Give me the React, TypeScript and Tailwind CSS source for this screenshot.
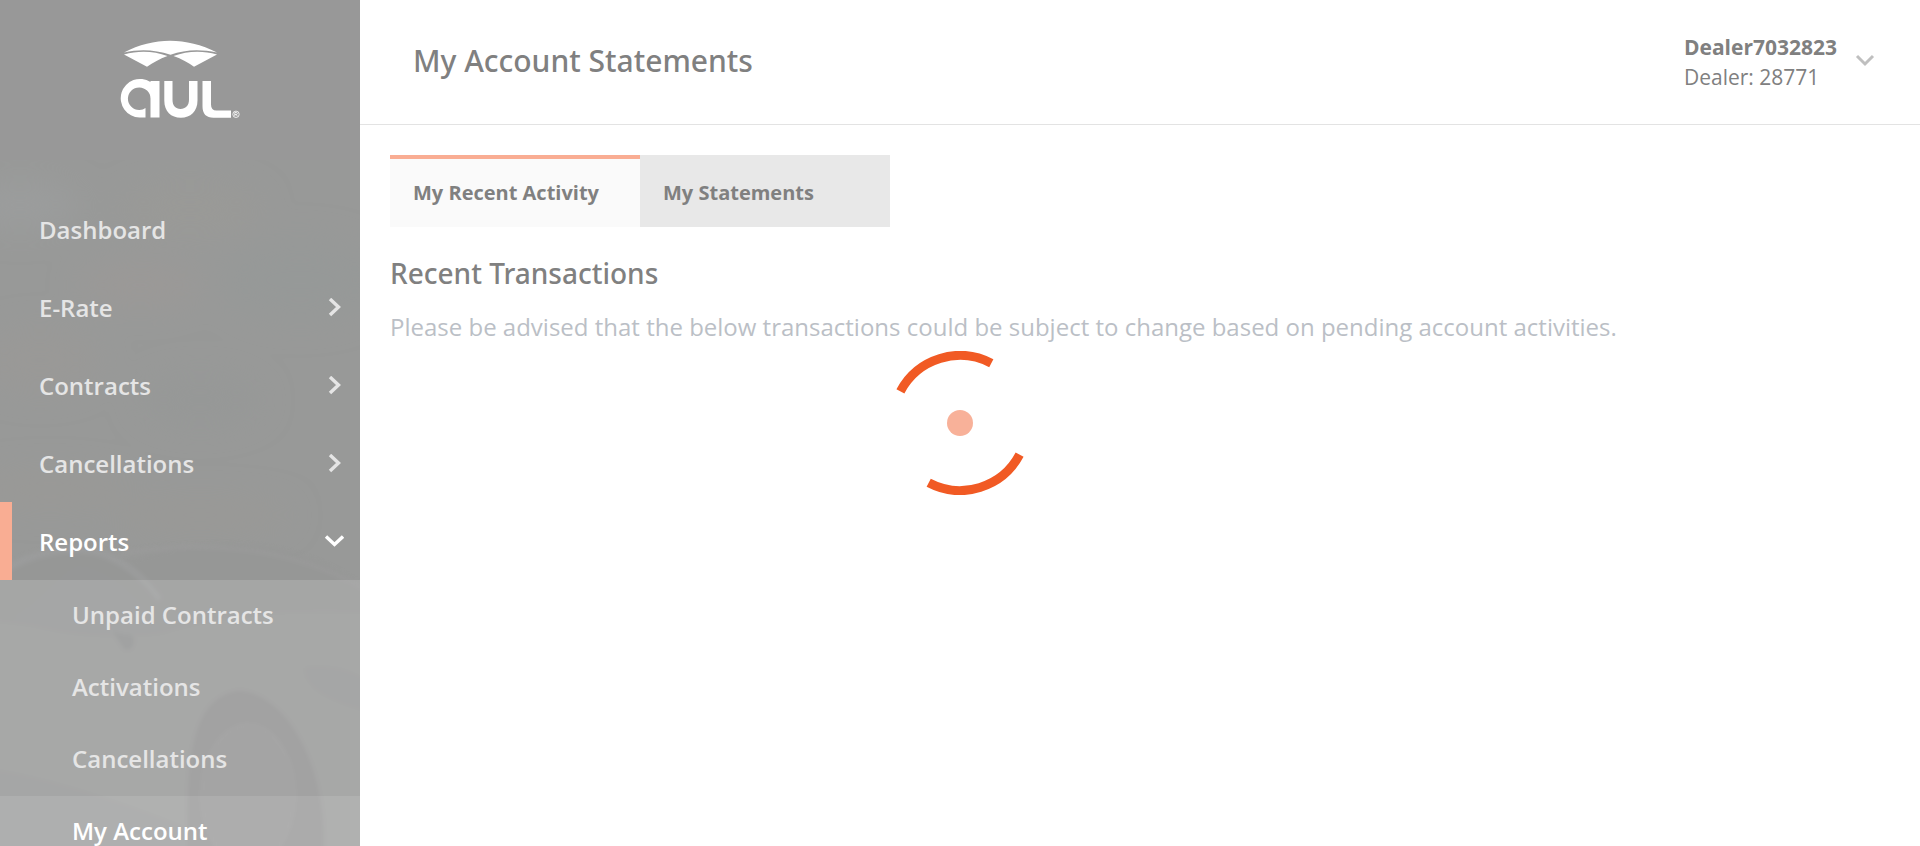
import React from "react";

type NavItem = { label: string; icon?: "right" | "down"; active?: boolean };

const navItems: NavItem[] = [
  { label: "Dashboard" },
  { label: "E-Rate", icon: "right" },
  { label: "Contracts", icon: "right" },
  { label: "Cancellations", icon: "right" },
  { label: "Reports", icon: "down", active: true },
];

const reportItems: NavItem[] = [
  { label: "Unpaid Contracts" },
  { label: "Activations" },
  { label: "Cancellations" },
  { label: "My Account", active: true },
];

function Chevron({ direction }: { direction: "right" | "down" }) {
  return direction === "right" ? (
    <svg width="20" height="20" viewBox="0 0 20 20" fill="none" stroke="currentColor" strokeWidth="3.4" aria-hidden="true">
      <path d="M6 1 L14.500 9 L6 17" />
    </svg>
  ) : (
    <svg width="20" height="20" viewBox="0 0 20 20" fill="none" stroke="currentColor" strokeWidth="3.4" aria-hidden="true">
      <path d="M2 4.500 L10.500 12.500 L19 4.500" />
    </svg>
  );
}

function Logo() {
  return (
    <svg width="122" height="80" viewBox="0 0 122 80" fill="#fff" role="img" aria-label="aul">
      <path d="M5 12.500 C35 -3.200 67 -3.200 98 12.500 C81 8.700 66 9.500 51.500 14.800 C36 9.500 21 8.700 5 12.500 Z" />
      <path d="M5 14.500 C20 10.300 35 11.100 48.500 16 C40.500 19 34 22.500 28 26.800 Z" />
      <path d="M98 14.500 C83 10.300 68 11.100 54.500 16 C62.500 19 69.500 22.500 75 26.800 Z" />
      <path d="M26.500 77.500 H20.500 A19.300 19.300 0 1 1 31.500 42 V41 H40.500 V77.500 H31.500 V59 A11.300 11.300 0 1 0 20.500 70 Q24 70 26.500 68 Z" />
      <path d="M45.300 41 H53.500 V59.800 C53.500 65.800 56.500 69 61.500 69 C66.500 69 70 65.800 70 59.800 V41 H78.500 V60.500 C78.500 71.500 71.500 77.700 61.900 77.700 C52 77.700 45.300 71.500 45.300 60.500 Z" />
      <path d="M83.500 41 H92 V64.500 Q92 70.500 97.500 70.500 H112 V77.700 H94.500 Q83.500 77.700 83.500 66.500 Z" />
      <g fill="none" stroke="#fff" strokeWidth="0.8">
        <circle cx="117" cy="74.300" r="3.200" />
        <path d="M115.800 76.300 V72.500 H117.300 A1 1 0 0 1 117.300 74.500 H115.800 M117.300 74.500 L118.400 76.300" />
      </g>
    </svg>
  );
}

function SidebarPhoto() {
  return (
    <svg className="absolute inset-0 h-full w-full" viewBox="0 0 360 846" preserveAspectRatio="xMinYMin slice" aria-hidden="true">
      <defs>
        <filter id="soft" x="-30%" y="-30%" width="160%" height="160%">
          <feGaussianBlur stdDeviation="16" />
        </filter>
        <filter id="edge" colorInterpolationFilters="sRGB">
          <feGaussianBlur stdDeviation="2" />
        </filter>
      </defs>
      <rect width="360" height="846" fill="#989998" />
      <g filter="url(#soft)">
        <ellipse cx="20" cy="205" rx="60" ry="22" fill="#9b9d9d" />
        <ellipse cx="190" cy="210" rx="70" ry="25" fill="#9a9a97" />
        <ellipse cx="140" cy="285" rx="60" ry="20" fill="#9b9997" />
        <ellipse cx="300" cy="280" rx="80" ry="40" fill="#969998" />
        <ellipse cx="40" cy="360" rx="60" ry="30" fill="#9a9997" />
        <ellipse cx="200" cy="400" rx="60" ry="24" fill="#969897" />
        <ellipse cx="50" cy="490" rx="80" ry="16" fill="#9a9996" />
        <ellipse cx="200" cy="515" rx="90" ry="14" fill="#9a9996" />
      </g>
      <g filter="url(#edge)">
        <path d="M-10 580 C30 545 90 545 125 562 C190 538 290 530 370 592 V860 H-10 Z" fill="#969796" />
        <path d="M-5 576 C30 552 75 542 108 556 C130 566 146 580 160 600" fill="none" stroke="#9b9c9c" strokeWidth="7" />
        <path d="M120 554 C200 540 290 545 365 590" fill="none" stroke="#9b9b9b" strokeWidth="3" />
        <path d="M-10 620 C80 630 130 640 165 632 C240 610 300 610 370 612 V860 H-10 Z" fill="#999a99" />
        <path d="M10 618 C45 600 65 565 80 566 C115 570 145 605 162 630 C120 640 60 636 10 618 Z" fill="#969797" />
        <path d="M112 632 L134 636 C136 648 130 652 124 650 Z" fill="#929393" />
        <path d="M305 668 C330 665 350 670 365 680 V710 C335 702 305 690 305 668 Z" fill="#969797" />
        <path d="M-10 770 C60 780 140 810 190 830 V860 H-10 Z" fill="#969797" />
        <path d="M188 850 C183 750 195 694 240 690 C290 695 328 770 324 850 Z" fill="#939393" />
        <ellipse cx="248" cy="795" rx="46" ry="70" fill="#959595" />
        <ellipse cx="248" cy="795" rx="46" ry="70" fill="none" stroke="#989898" strokeWidth="2" />
      </g>
    </svg>
  );
}

function Sidebar() {
  return (
    <aside className="relative h-screen w-[360px] shrink-0 overflow-hidden bg-[#979797]">
      <SidebarPhoto />
      <div className="relative">
        <a href="#" className="flex h-40 items-start justify-center bg-[#989898] pt-10">
          <Logo />
        </a>
        <nav className="pt-[30px] text-2xl font-semibold text-[#e5e5e5]" aria-label="Main">
          <ul>
            {navItems.map((item) => (
              <li key={item.label}>
                <a
                  href="#"
                  className={
                    item.active
                      ? "flex h-[78px] items-center justify-between border-l-12 border-[#f9ad93] pt-0.5 pr-4 pl-[27px] text-white"
                      : "flex h-[78px] items-center justify-between pt-0.5 pr-4 pl-[39px]"
                  }
                >
                  {item.label}
                  {item.icon && <Chevron direction={item.icon} />}
                </a>
              </li>
            ))}
          </ul>
          <ul className="bg-white/14">
            {reportItems.map((item) => (
              <li key={item.label}>
                <a
                  href="#"
                  className={
                    item.active
                      ? "flex h-[72px] items-center bg-white/10 pb-0.5 pl-[72px] text-white"
                      : "flex h-[72px] items-center pb-0.5 pl-[72px]"
                  }
                >
                  {item.label}
                </a>
              </li>
            ))}
          </ul>
        </nav>
      </div>
    </aside>
  );
}

function Spinner() {
  return (
    <div className="pointer-events-none fixed inset-0 flex items-center justify-center" role="status" aria-label="Loading">
      <svg width="144" height="144" viewBox="-72 -72 144 144">
        <g fill="none" stroke="#f15a24" strokeWidth="9">
          <path d="M-59.600 -31.700 A67.500 67.500 0 0 1 31.300 -59.800" />
          <path d="M59.600 31.700 A67.500 67.500 0 0 1 -31.300 59.800" />
        </g>
        <circle r="13" fill="#f8b199" />
      </svg>
    </div>
  );
}

export default function App() {
  return (
    <div className="flex h-screen overflow-hidden bg-white font-['Open_Sans',sans-serif] text-[#808080]">
      <Sidebar />
      <div className="min-w-0 flex-1">
        <header className="flex h-[125px] items-center justify-between border-b border-[#e3e3e3] pr-[45px] pl-[53px]">
          <h1 className="pb-1 font-['Noto_Sans',sans-serif] text-[30px] font-medium">My Account Statements</h1>
          <button type="button" className="flex items-center gap-[18px] text-left text-[21px] leading-[30px]">
            <span>
              <span className="block font-bold">Dealer7032823</span>
              <span className="block">Dealer: 28771</span>
            </span>
            <svg width="20" height="20" viewBox="0 0 20 20" fill="none" stroke="#bfbfbf" strokeWidth="3" aria-hidden="true">
              <path d="M2 4 L10 12 L18 4" />
            </svg>
          </button>
        </header>
        <main className="px-[30px] pt-[30px]">
          <div role="tablist" className="flex text-xl font-bold">
            <button
              type="button"
              role="tab"
              aria-selected="true"
              className="h-[72px] w-[250px] border-t-4 border-[#f9ad93] bg-[#fafafa] pl-[23px] text-left"
            >
              My Recent Activity
            </button>
            <button type="button" role="tab" aria-selected="false" className="h-[72px] w-[250px] bg-[#e8e8e8] pt-1 pl-[23px] text-left">
              My Statements
            </button>
          </div>
          <h2 className="mt-7 font-['Noto_Sans',sans-serif] text-[28px] leading-9 font-medium">Recent Transactions</h2>
          <p className="mt-5 text-2xl leading-8 text-[#bbbfc6]">
            Please be advised that the below transactions could be subject to change based on pending account activities.
          </p>
        </main>
      </div>
      <Spinner />
    </div>
  );
}
